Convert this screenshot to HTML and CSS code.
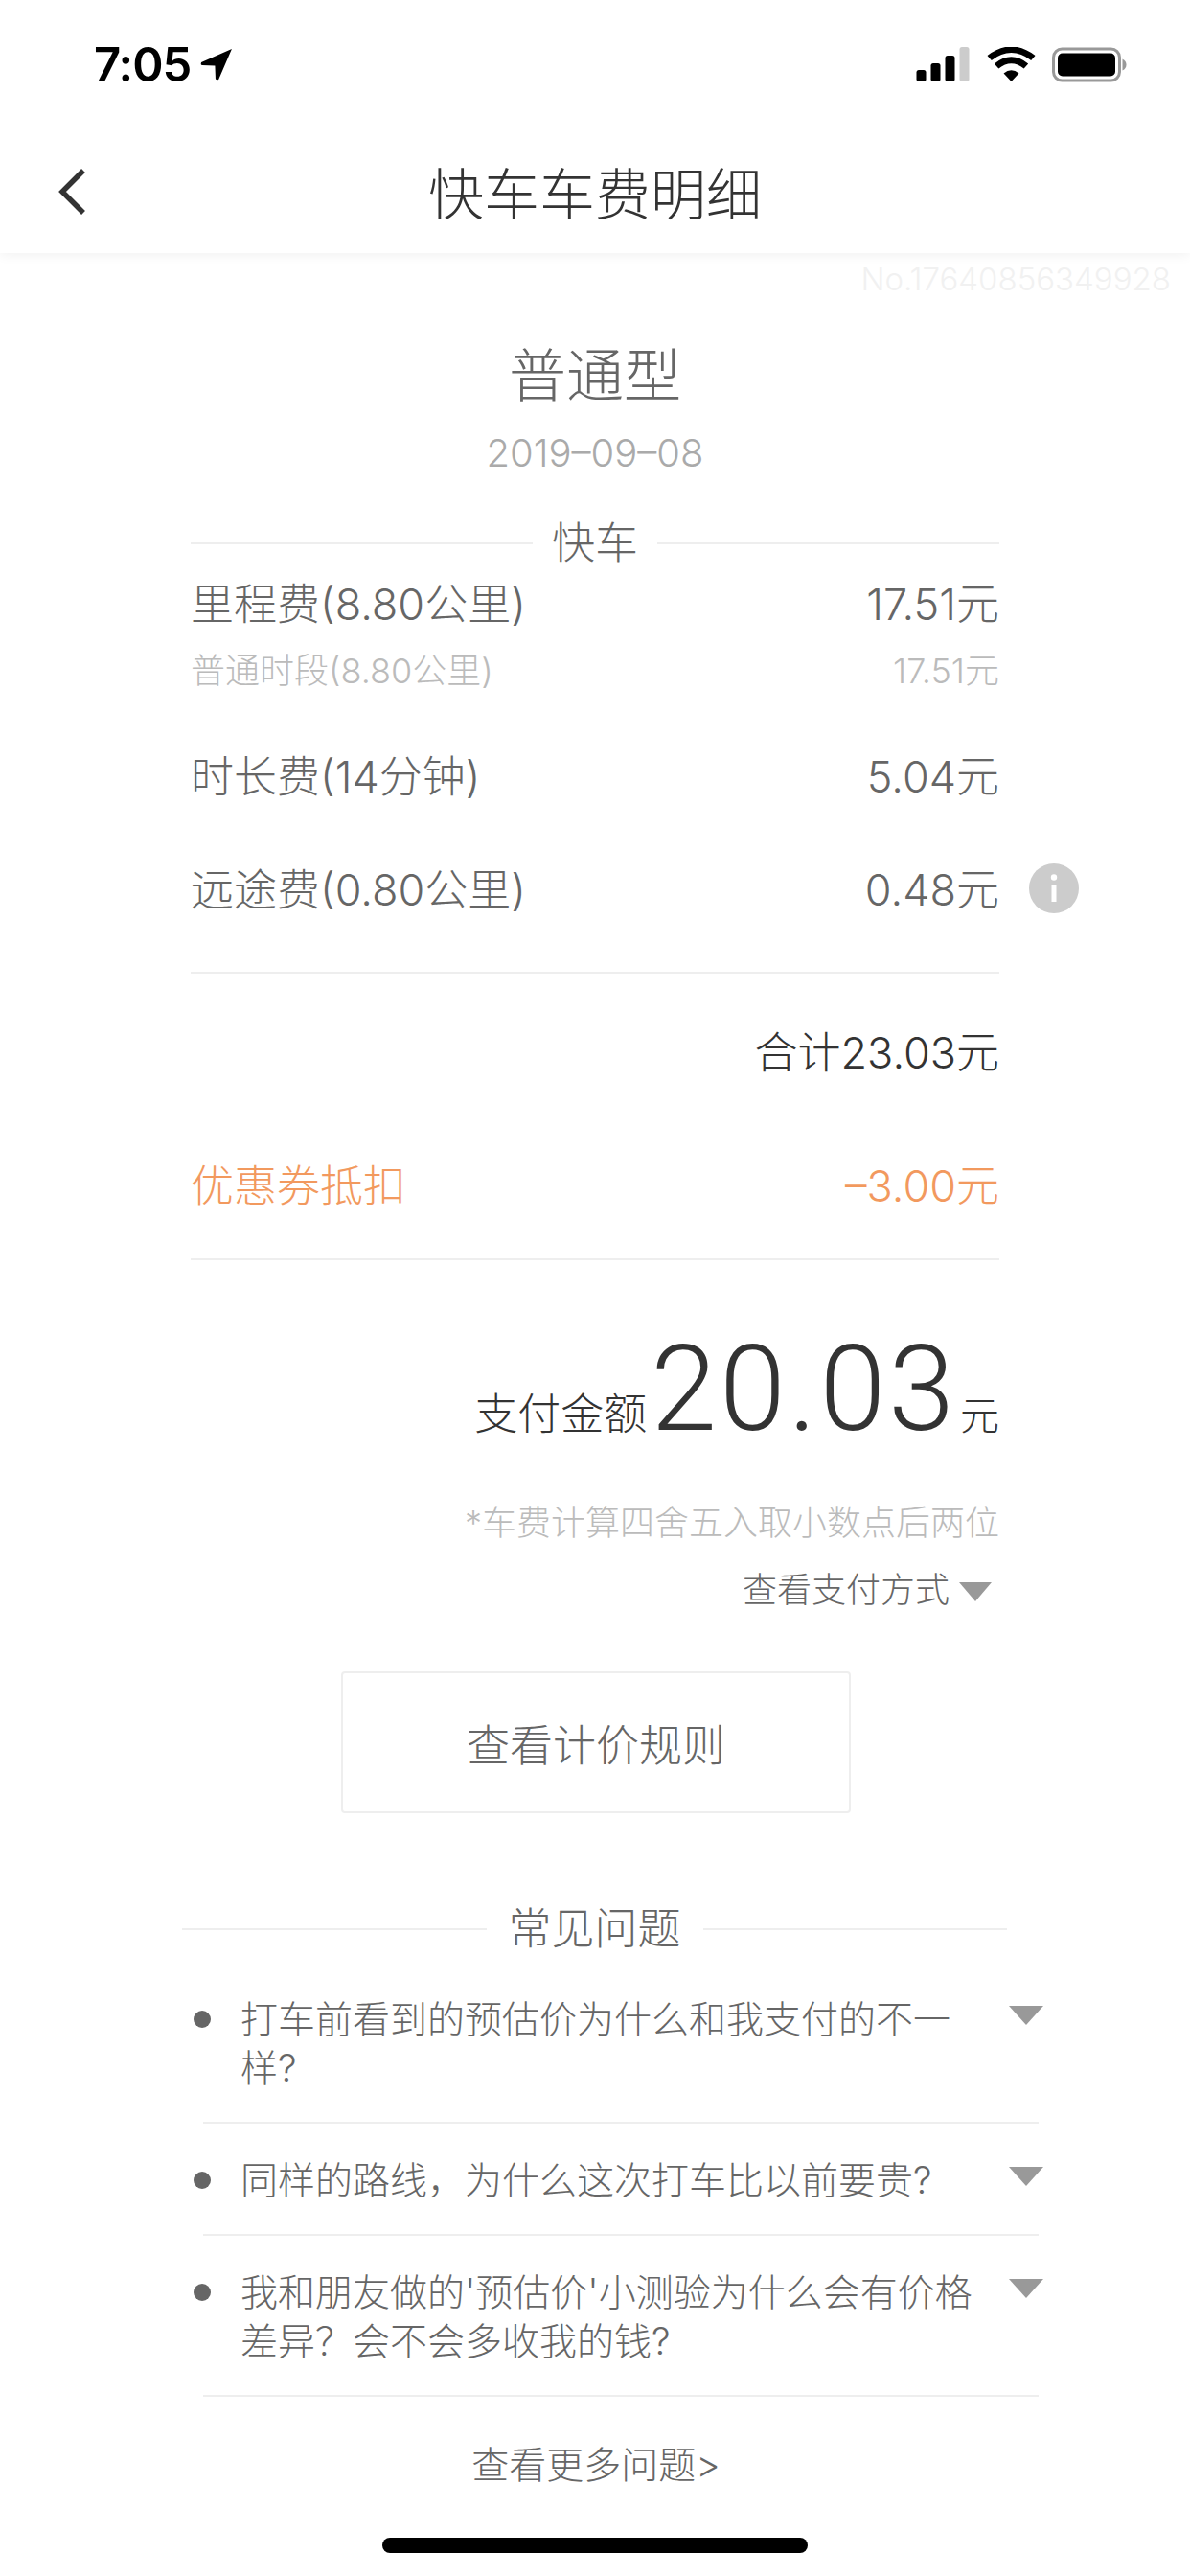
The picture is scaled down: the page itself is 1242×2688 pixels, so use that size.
FILE: index.html
```html
<!DOCTYPE html>
<html lang="zh">
<head>
  <meta charset="UTF-8" />
  <meta name="viewport" content="width=device-width, initial-scale=1.0" />
  <title>快车车费明细</title>
  <link rel="stylesheet" href="styles.css">
</head>
<body>

  <div class="top-bar">
    <div class="status-bar">
      <div class="status-time">
        <span>7:05</span>
        <svg class="arrow-icon" width="34" height="34" viewBox="0 0 32 32"><path d="M31 1 L1 14 Q0 16.5 2 17 L14.5 17.5 L15 30 Q15.5 32 18 31 Z" fill="#000"/></svg>
      </div>
      <div class="status-icons">
        <svg width="57" height="36" viewBox="0 0 56 36">
          <rect x="0" y="24" width="10" height="12" rx="2.5" fill="#000"/>
          <rect x="15" y="17" width="10" height="19" rx="2.5" fill="#000"/>
          <rect x="30" y="9" width="10" height="27" rx="2.5" fill="#000"/>
          <rect x="45" y="0" width="10" height="36" rx="2.5" fill="#ccc"/>
        </svg>
        <svg width="51" height="36" viewBox="0 0 48 36" preserveAspectRatio="none">
          <path d="M24 36 L16.5 27.5 Q24 21 31.500 27.5 Z" fill="#000"/>
          <path d="M9.500 20 Q24 7.500 38.500 20" fill="none" stroke="#000" stroke-width="6.500"/>
          <path d="M2.500 11.500 Q24 -6 45.500 11.500" fill="none" stroke="#000" stroke-width="6.500"/>
        </svg>
        <svg width="78" height="37" viewBox="0 0 78 36">
          <rect x="1.500" y="1.500" width="69" height="33" rx="9" fill="#fff" stroke="#999" stroke-width="3"/>
          <rect x="6" y="6" width="60" height="24" rx="5" fill="#000"/>
          <path d="M73.500 12 Q77.500 14 77.500 18 Q77.500 22 73.500 24 Z" fill="#999"/>
        </svg>
      </div>
    </div>
    <div class="nav-bar">
      <svg class="back-icon" width="30" height="50" viewBox="0 0 30 50"><path d="M27 3 L5 25 L27 47" fill="none" stroke="#333" stroke-width="5.500"/></svg>
      <div class="nav-title">快车车费明细</div>
    </div>
  </div>

  <div class="order-no">No.17640856349928</div>
  <div class="car-type">普通型</div>
  <div class="order-date">2019–09–08</div>

  <div class="fee-panel">
    <div class="section-title">
      <span class="section-line"></span>
      <span class="section-name">快车</span>
      <span class="section-line"></span>
    </div>

    <div class="fee-row fee-first"><span>里程费(8.80公里)</span><span>17.51元</span></div>
    <div class="fee-row fee-sub"><span>普通时段(8.80公里)</span><span>17.51元</span></div>
    <div class="fee-row fee-time"><span>时长费(14分钟)</span><span>5.04元</span></div>
    <div class="fee-row fee-far">
      <span>远途费(0.80公里)</span><span>0.48元</span>
      <svg class="info-icon" width="52" height="52" viewBox="0 0 52 52">
        <circle cx="26" cy="26" r="26" fill="#ccc"/>
        <circle cx="26" cy="14.500" r="3.200" fill="#fff"/>
        <rect x="23.500" y="22" width="5" height="18" fill="#fff"/>
      </svg>
    </div>

    <div class="divider divider-fee"></div>
    <div class="fee-row fee-total"><span></span><span>合计23.03元</span></div>
    <div class="fee-row fee-coupon"><span>优惠券抵扣</span><span>–3.00元</span></div>
    <div class="divider divider-coupon"></div>

    <div class="pay-row">
      <span class="pay-label">支付金额</span><span class="pay-amount">20.03</span><span class="pay-unit">元</span>
    </div>
    <div class="round-note">*车费计算四舍五入取小数点后两位</div>
    <div class="pay-way">查看支付方式<span class="caret caret-way"></span></div>
  </div>

  <div class="rule-btn">查看计价规则</div>

  <div class="faq">
    <div class="faq-title">
      <span class="section-line"></span>
      <span class="faq-name">常见问题</span>
      <span class="section-line"></span>
    </div>

    <div class="faq-item faq-first">
      <span class="faq-dot"></span>
      <div class="faq-text">打车前看到的预估价为什么和我支付的不一样?</div>
      <span class="caret caret-faq"></span>
    </div>
    <div class="faq-item">
      <span class="faq-dot"></span>
      <div class="faq-text">同样的路线&#xFF0C;为什么这次打车比以前要贵?</div>
      <span class="caret caret-faq"></span>
    </div>
    <div class="faq-item">
      <span class="faq-dot"></span>
      <div class="faq-text">我和朋友做的'预估价'小测验为什么会有价格差异&#xFF1F;会不会多收我的钱?</div>
      <span class="caret caret-faq"></span>
    </div>
    <div class="faq-more">查看更多问题&gt;</div>
  </div>

  <div class="home-bar"></div>

</body>
</html>
```

FILE: styles.css
```css
* {
  box-sizing: border-box;
}

html, body {
  height: 2688px;
}

body {
  margin: 0;
  position: relative;
  overflow: hidden;
  background: #fff;
  color: #666;
  font-family: Inter, "Noto Sans CJK SC", sans-serif;
  font-weight: 300;
}

/* top */
.top-bar {
  height: 264px;
  background: #fff;
  box-shadow: 0 2px 12px rgba(0,0,0,0.06);
}

.status-bar {
  height: 134px;
  display: flex;
  justify-content: space-between;
  align-items: center;
  padding: 0 66px 0 98px;
}

.status-time {
  display: flex;
  align-items: center;
  gap: 10px;
  font-family: Inter, sans-serif;
  font-size: 49px;
  font-weight: 600;
  letter-spacing: -1px;
  color: #000;
}

.status-icons {
  display: flex;
  align-items: center;
  gap: 17px;
}

.nav-bar {
  height: 130px;
  display: flex;
  align-items: center;
  justify-content: center;
  position: relative;
}

.back-icon {
  position: absolute;
  left: 60px;
  top: 41px;
}

.nav-title {
  font-size: 58px;
  color: #333;
}

/* heading */
.order-no {
  margin-top: 7px;
  padding-right: 20px;
  height: 40px;
  line-height: 40px;
  text-align: right;
  font-size: 33px;
  color: #f1f1f1;
}

.car-type {
  margin-top: 46px;
  height: 70px;
  line-height: 70px;
  text-align: center;
  font-size: 60px;
}

.order-date {
  margin-top: 21px;
  height: 50px;
  line-height: 50px;
  text-align: center;
  font-size: 40px;
  color: #aaa;
}

/* fees */
.fee-panel {
  margin: 39px 199px 0;
}

.section-title {
  height: 60px;
  display: flex;
  align-items: center;
}

.section-line {
  flex: 1;
  height: 2px;
  background: #eee;
}

.section-name {
  width: 130px;
  text-align: center;
  font-size: 45px;
  line-height: 60px;
}

.fee-row {
  height: 60px;
  line-height: 60px;
  display: flex;
  justify-content: space-between;
  font-size: 45px;
  position: relative;
}

.fee-first {
  margin-top: 4px;
}

.fee-sub {
  margin-top: 14px;
  height: 50px;
  line-height: 50px;
  font-size: 36px;
  color: #bbb;
}

.fee-time {
  margin-top: 56px;
}

.fee-far {
  margin-top: 58px;
}

.info-icon {
  position: absolute;
  right: -83px;
  top: 2px;
}

.divider {
  height: 2px;
  background: #eee;
}

.divider-fee {
  margin-top: 55px;
}

.fee-total {
  margin-top: 53px;
  color: #333;
}

.fee-coupon {
  margin-top: 79px;
  color: #f2995e;
}

.divider-coupon {
  margin-top: 45px;
}

.pay-row {
  margin-top: 60px;
  display: flex;
  justify-content: flex-end;
  align-items: baseline;
  color: #333;
  height: 150px;
  line-height: 150px;
}

.pay-label {
  font-size: 45px;
}

.pay-amount {
  font-family: Roboto, sans-serif;
  font-size: 124px;
  letter-spacing: 3px;
  margin: 0 3px 0 4px;
}

.pay-unit {
  font-size: 41px;
}

.round-note {
  margin-top: 39px;
  height: 50px;
  line-height: 50px;
  text-align: right;
  font-size: 36px;
  color: #bbb;
}

.pay-way {
  margin-top: 20px;
  height: 50px;
  line-height: 50px;
  display: flex;
  justify-content: flex-end;
  align-items: center;
  font-size: 36px;
}

.caret {
  display: block;
  width: 0;
  height: 0;
  border-style: solid;
  border-color: #999 transparent transparent;
}

.caret-way {
  margin: 4px 8px 0 10px;
  border-width: 20px 17px 0;
}

.rule-btn {
  width: 532px;
  height: 148px;
  margin: 60px 0 0 356px;
  border: 2px solid #eee;
  border-radius: 4px;
  display: flex;
  align-items: center;
  justify-content: center;
  font-size: 45px;
}

/* questions */
.faq {
  margin: 91px 158px 0 190px;
}

.faq-title {
  height: 60px;
  display: flex;
  align-items: center;
  margin-right: 33px;
}

.faq-name {
  width: 226px;
  text-align: center;
  font-size: 45px;
  line-height: 60px;
}

.faq-item {
  margin-left: 22px;
  padding: 33px 0 31px;
  display: flex;
  align-items: flex-start;
  border-bottom: 2px solid #eee;
  font-size: 39px;
  line-height: 51px;
}

.faq-first {
  padding-top: 38px;
}

.faq-dot {
  flex: none;
  width: 18px;
  height: 18px;
  margin: 17px 31px 0 -10px;
  border-radius: 50%;
  background: #666;
}

.faq-text {
  width: 780px;
}

.caret-faq {
  flex: none;
  margin: 12px -5px 0 auto;
  border-width: 20px 18px 0;
}

.faq-more {
  margin-top: 41px;
  height: 60px;
  line-height: 60px;
  width: 864px;
  text-align: center;
  font-size: 39px;
}

.home-bar {
  position: absolute;
  left: 399px;
  top: 2648px;
  width: 444px;
  height: 16px;
  border-radius: 8px;
  background: #000;
}
```
